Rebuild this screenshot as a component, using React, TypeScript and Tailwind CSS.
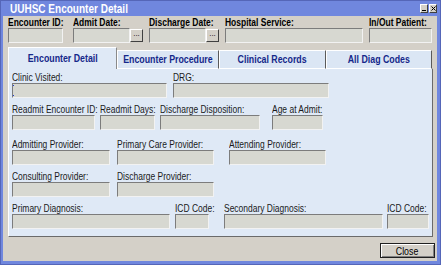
import React from 'react';

function Narrow({ children, className = '', center = false }: { children: React.ReactNode; className?: string; center?: boolean }) {
  return (
    <span className={`inline-block whitespace-nowrap scale-x-[0.77] ${center ? 'origin-center' : 'origin-left'} ${className}`}>
      {children}
    </span>
  );
}

function Input({ className = '' }: { className?: string }) {
  return (
    <div
      className={`h-[15px] bg-[#d7d8d1] border border-t-[#7c7c7c] border-l-[#7c7c7c] border-b-[#f2f2f2] border-r-[#f2f2f2] ${className}`}
    />
  );
}

function Field({ label, width, className = '' }: { label: string; width: string; className?: string }) {
  return (
    <div className={`flex flex-col shrink-0 ${width} ${className}`}>
      <div className="h-[11px] leading-[11px] text-[11px] text-[#1a1a1a] whitespace-nowrap">
        <Narrow>{label}</Narrow>
      </div>
      <Input className={width} />
    </div>
  );
}

function HeaderField({ label, width, children, className = '' }: { label: string; width: string; children: React.ReactNode; className?: string }) {
  return (
    <div className={`flex flex-col shrink-0 ${width} ${className}`}>
      <div className="h-[11px] leading-[11px] text-[11px] font-bold text-black whitespace-nowrap">
        <Narrow>{label}</Narrow>
      </div>
      <div className="flex items-end">{children}</div>
    </div>
  );
}

function DotsButton() {
  return (
    <div className="w-[13px] h-[13px] mb-px shrink-0 bg-[#d4d0c8] border border-t-white border-l-white border-b-[#404040] border-r-[#404040] flex items-center justify-center text-[8px] leading-[8px] text-black pb-[3px]">
      ...
    </div>
  );
}

const tabs = ['Encounter Detail', 'Encounter Procedure', 'Clinical Records', 'All Diag Codes'];
const tabWidths = ['w-[109px]', 'w-[102px]', 'w-[107px]', 'w-[106px]'];

export default function App() {
  return (
    <div className="w-[441px] h-[265px] bg-[#7087de] border border-[#5566b8] flex flex-col font-['Liberation_Sans',Arial,sans-serif]">
      {/* Title bar */}
      <div className="h-[15px] flex items-center justify-between pl-[9px] pr-[3px]">
        <span className="text-white font-bold text-[13px] leading-[14px]">
          <Narrow>UUHSC Encounter Detail</Narrow>
        </span>
        <div className="flex gap-px">
          <div className="w-[8px] h-[9px] bg-[#d4d0c8] border border-t-white border-l-white border-b-[#404040] border-r-[#404040] flex items-end justify-center pb-px">
            <div className="w-[4px] h-px bg-black" />
          </div>
          <div className="w-[8px] h-[9px] bg-[#d4d0c8] border border-t-white border-l-white border-b-[#404040] border-r-[#404040] flex items-center justify-center">
            <svg width="5" height="5" viewBox="0 0 5 5">
              <path d="M0.5 0.5 L4.5 4.5 M4.5 0.5 L0.5 4.5" stroke="black" strokeWidth="1" />
            </svg>
          </div>
        </div>
      </div>

      {/* Body */}
      <div className="flex-1 ml-[2px] mr-[3px] mb-[3px] bg-[#d4d0c8] flex flex-col pl-[5px]">
        <div className="flex items-end mt-px">
          <HeaderField label="Encounter ID:" width="w-[55px]">
            <Input className="w-[55px]" />
          </HeaderField>
          <HeaderField label="Admit Date:" width="w-[70px]" className="ml-[10px]">
            <Input className="w-[57px]" />
            <DotsButton />
          </HeaderField>
          <HeaderField label="Discharge Date:" width="w-[70px]" className="ml-[6px]">
            <Input className="w-[57px]" />
            <DotsButton />
          </HeaderField>
          <HeaderField label="Hospital Service:" width="w-[138px]" className="ml-[6px]">
            <Input className="w-[138px]" />
          </HeaderField>
          <HeaderField label="In/Out Patient:" width="w-[63px]" className="ml-[6px]">
            <Input className="w-[63px]" />
          </HeaderField>
        </div>

        {/* Tabs */}
        <div className="flex items-end mt-[5px] h-[21px] relative z-10 -mb-px">
          {tabs.map((t, i) => (
            <div
              key={t}
              className={`${tabWidths[i]} shrink-0 ${
                i === 0
                  ? 'h-[22px] bg-[#dfe9f6] border-t border-l border-r border-t-white border-l-white border-r-[#8a8a8a]'
                  : 'h-[19px] bg-[#dbe6f4] border-t border-l border-r border-b border-t-white border-l-white border-r-[#5a5a5a] border-b-white'
              } flex items-center justify-center text-[11px] font-bold text-[#15288a]`}
            >
              <span className="inline-block whitespace-nowrap scale-x-[0.8] origin-center">{t}</span>
            </div>
          ))}
        </div>

        {/* Panel */}
        <div className="w-[425px] h-[169px] bg-[#dfe9f6] border border-t-white border-l-white border-r-[#6a6a6a] border-b-[#6a6a6a] pl-[3px] pt-[3px] flex flex-col">
          <div className="flex">
            <div className="flex flex-col relative w-[155px]">
              <div className="h-[11px] leading-[11px] text-[11px] text-[#1a1a1a] whitespace-nowrap">
                <Narrow>Clinic Visited:</Narrow>
              </div>
              <Input className="w-[155px]" />
              <div className="absolute left-[1px] top-[13px] w-px h-px bg-[#1f3fd0]" />
              <div className="absolute left-[1px] top-[23px] w-px h-px bg-[#1f3fd0]" />
            </div>
            <Field label="DRG:" width="w-[156px]" className="ml-[6px]" />
          </div>

          <div className="flex mt-[6px]">
            <Field label="Readmit Encounter ID:" width="w-[83px]" />
            <Field label="Readmit Days:" width="w-[55px]" className="ml-[5px]" />
            <Field label="Discharge Disposition:" width="w-[100px]" className="ml-[5px]" />
            <Field label="Age at Admit:" width="w-[51px]" className="ml-[12px]" />
          </div>

          <div className="flex mt-[9px]">
            <Field label="Admitting Provider:" width="w-[98px]" />
            <Field label="Primary Care Provider:" width="w-[97px]" className="ml-[7px]" />
            <Field label="Attending Provider:" width="w-[97px]" className="ml-[15px]" />
          </div>

          <div className="flex mt-[6px]">
            <Field label="Consulting Provider:" width="w-[98px]" />
            <Field label="Discharge Provider:" width="w-[97px]" className="ml-[7px]" />
          </div>

          <div className="flex mt-[6px]">
            <Field label="Primary Diagnosis:" width="w-[158px]" />
            <Field label="ICD Code:" width="w-[34px]" className="ml-[5px]" />
            <Field label="Secondary Diagnosis:" width="w-[159px]" className="ml-[15px]" />
            <Field label="ICD Code:" width="w-[42px]" className="ml-[4px]" />
          </div>
        </div>

        <div className="flex justify-end mt-[6px] pr-[2px]">
          <button className="w-[55px] h-[15px] bg-[#d4d0c8] border border-[#202020] shadow-[inset_1px_1px_0_#ffffff,inset_-1px_-1px_0_#808080] text-[11px] leading-[12px] text-black">
            <span className="inline-block scale-x-[0.8]">Close</span>
          </button>
        </div>
      </div>
    </div>
  );
}
